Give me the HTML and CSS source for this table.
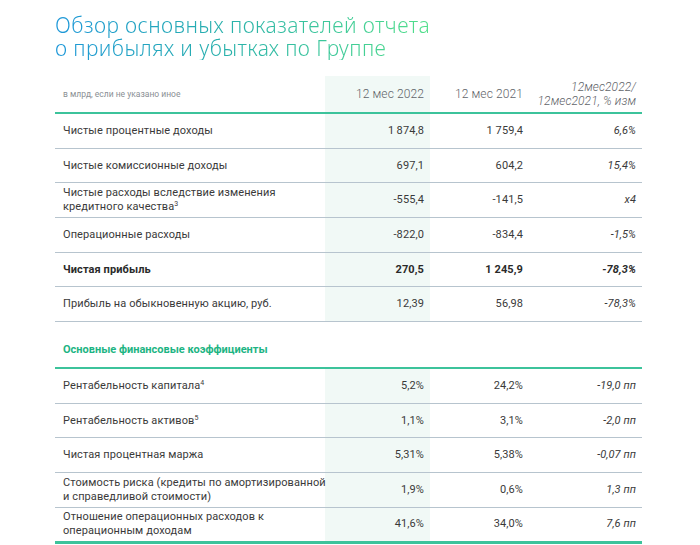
FILE: index.html
```html
<!DOCTYPE html>
<html lang="ru">
<head>
<meta charset="utf-8">
<title>Обзор основных показателей</title>
<link rel="stylesheet" href="styles.css">
</head>
<body>
<div class="page">
  <h1 class="title"><span class="grad">Обзор основных показателей отчета<br>о прибылях и убытках по Группе</span></h1>

  <table class="report">
    <colgroup>
      <col class="c-name"><col class="c-cur"><col class="c-prev"><col class="c-chg">
    </colgroup>
    <thead>
      <tr>
        <th class="name unit">в млрд, если не указано иное</th>
        <th class="cur">12 мес 2022</th>
        <th class="prev">12 мес 2021</th>
        <th class="chg">12мес2022/<br>12мес2021, % изм</th>
      </tr>
    </thead>
    <tbody>
      <tr><td class="name">Чистые процентные доходы</td><td class="cur">1&#8201;874,8</td><td class="prev">1 759,4</td><td class="chg">6,6%</td></tr>
      <tr><td class="name">Чистые комиссионные доходы</td><td class="cur">697,1</td><td class="prev">604,2</td><td class="chg">15,4%</td></tr>
      <tr><td class="name">Чистые расходы вследствие изменения<br>кредитного качества<sup>3</sup></td><td class="cur">-555,4</td><td class="prev">-141,5</td><td class="chg">x4</td></tr>
      <tr><td class="name">Операционные расходы</td><td class="cur">-822,0</td><td class="prev">-834,4</td><td class="chg">-1,5%</td></tr>
      <tr class="bold"><td class="name">Чистая прибыль</td><td class="cur">270,5</td><td class="prev">1 245,9</td><td class="chg">-78,3%</td></tr>
      <tr><td class="name">Прибыль на обыкновенную акцию, руб.</td><td class="cur">12,39</td><td class="prev">56,98</td><td class="chg">-78,3%</td></tr>
    </tbody>
  </table>

  <div class="section">Основные финансовые коэффициенты</div>

  <table class="report ratios">
    <colgroup>
      <col class="c-name"><col class="c-cur"><col class="c-prev"><col class="c-chg">
    </colgroup>
    <tbody>
      <tr><td class="name">Рентабельность капитала<sup>4</sup></td><td class="cur">5,2%</td><td class="prev">24,2%</td><td class="chg">-19,0 пп</td></tr>
      <tr><td class="name">Рентабельность активов<sup>5</sup></td><td class="cur">1,1%</td><td class="prev">3,1%</td><td class="chg">-2,0 пп</td></tr>
      <tr><td class="name">Чистая процентная маржа</td><td class="cur">5,31%</td><td class="prev">5,38%</td><td class="chg">-0,07 пп</td></tr>
      <tr><td class="name">Стоимость риска (кредиты по амортизированной<br>и справедливой стоимости)</td><td class="cur">1,9%</td><td class="prev">0,6%</td><td class="chg">1,3 пп</td></tr>
      <tr class="last"><td class="name">Отношение операционных расходов к<br>операционным доходам</td><td class="cur">41,6%</td><td class="prev">34,0%</td><td class="chg">7,6 пп</td></tr>
    </tbody>
  </table>
</div>
</body>
</html>
```

FILE: styles.css
```css
html, body {
  margin: 0;
  padding: 0;
  background: #ffffff;
}

.page {
  width: 700px;
  height: 545px;
  overflow: hidden;
  font-family: Roboto, "Liberation Sans", sans-serif;
  color: #3a3a3a;
}

.title {
  margin: 0;
  padding: 14px 0 0 55px;
  font-family: "Noto Sans", sans-serif;
  font-weight: 300;
  font-size: 21px;
  line-height: 23px;
  letter-spacing: 0.4px;
}

.grad {
  display: inline-block;
  background: linear-gradient(90deg, #1d97d9 0%, #28b0ab 45%, #52df8a 100%);
  -webkit-background-clip: text;
  background-clip: text;
  color: transparent;
}

.report {
  margin: 16px 0 0 55px;
  width: 587px;
  border-collapse: collapse;
  table-layout: fixed;
  font-size: 11px;
  letter-spacing: 0.1px;
}

.report.ratios {
  margin-top: 0;
}

.c-name { width: 270px; }
.c-cur { width: 105px; }
.c-prev { width: 100px; }
.c-chg { width: 112px; }

.report th,
.report td {
  padding: 0;
  vertical-align: middle;
  font-weight: 400;
  white-space: nowrap;
}

.report td {
  height: 33.7px;
  line-height: 14px;
  border-bottom: 1px solid #b7c4ce;
}

.ratios td {
  height: 33.6px;
}

.report thead th {
  height: 36px;
  border-bottom: 2px solid #3cc39b;
}

.name {
  text-align: left;
  padding-left: 8px !important;
}

.cur {
  text-align: right;
  padding-right: 6px !important;
  background: #f1f9f6;
}

.prev {
  text-align: right;
  padding-right: 7px !important;
}

.chg {
  text-align: right;
  padding-right: 6px !important;
  font-style: italic;
}

th.unit {
  font-size: 8.5px;
  color: #8a8f94;
  letter-spacing: 0;
}

th.cur,
th.prev {
  font-size: 12px;
  font-weight: 300;
  color: #5f6469;
}

th.chg {
  font-size: 12px;
  font-weight: 300;
  line-height: 14px;
  color: #5f6469;
}

.bold td {
  font-weight: 700;
  color: #2a2a2a;
}

sup {
  font-size: 7px;
  line-height: 0;
  vertical-align: 4px;
}

.section {
  margin: 21px 0 0 55px;
  width: 579px;
  padding: 0 0 10px 8px;
  font-size: 11px;
  line-height: 14px;
  font-weight: 700;
  color: #1db483;
  border-bottom: 2px solid #3cc39b;
}

.ratios tr.last td {
  border-bottom: 3px solid #3cc39b;
}
```
